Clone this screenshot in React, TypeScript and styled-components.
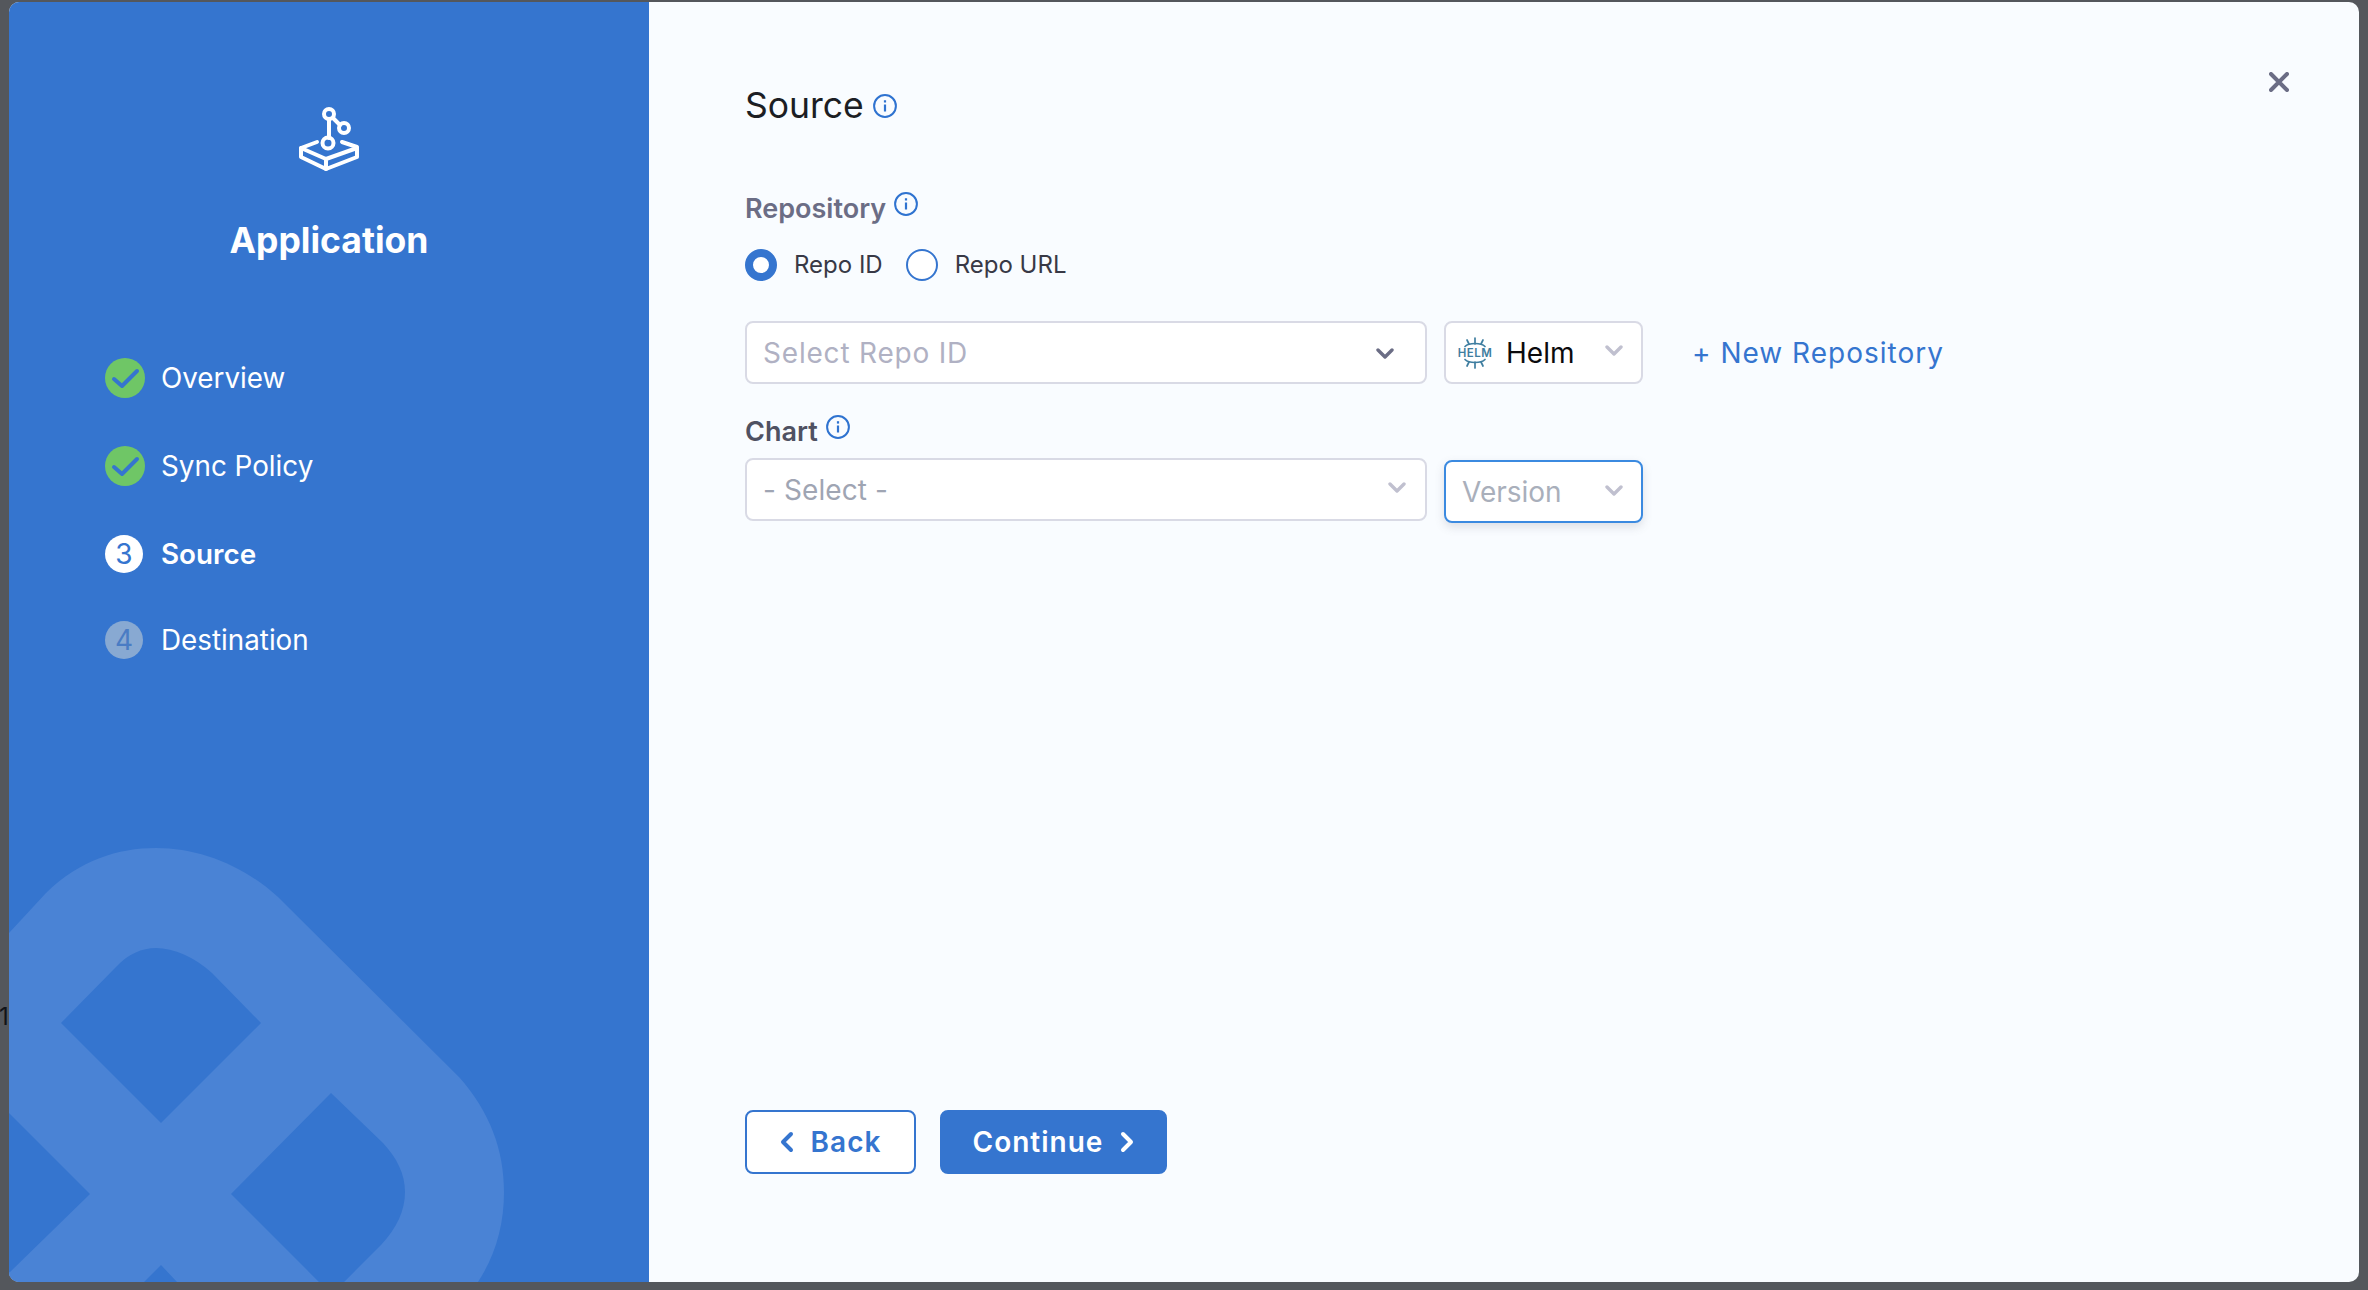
import React from "react";
import styled, { createGlobalStyle } from "styled-components";

const Global = createGlobalStyle`
  html, body { margin: 0; padding: 0; height: 100%; background: #54575c; overflow: hidden; }
  body { font-family: Inter, "Liberation Sans", sans-serif; }
  #root { height: 100%; }
`;

const Page = styled.div`
  position: relative;
  box-sizing: border-box;
  height: 1290px;
  padding: 2px 9px 8px;
  background: #54575c;
`;

const StrayDigit = styled.span`
  position: absolute;
  left: -1px;
  top: 1003px;
  font-size: 24px;
  line-height: 28px;
  color: #111318;
`;

const Modal = styled.div`
  display: flex;
  height: 1280px;
  border-radius: 10px;
  overflow: hidden;
  background: #f9fcff;
`;

const Sidebar = styled.aside`
  position: relative;
  flex: 0 0 640px;
  display: flex;
  flex-direction: column;
  overflow: hidden;
  background: #3575cf;
`;

const Watermark = styled.svg`
  position: absolute;
  left: 0;
  top: 0;
  width: 640px;
  height: 1280px;
`;

const Brand = styled.div`
  position: relative;
  display: flex;
  flex-direction: column;
  align-items: center;
  padding-top: 105px;
`;

const BrandIcon = styled.svg`
  display: block;
  width: 64px;
  height: 66px;
  margin-left: 2px;
`;

const BrandTitle = styled.h1`
  margin: 46px 0 0;
  font-size: 35.5px;
  line-height: 44px;
  font-weight: 700;
  color: #fff;
`;

const Steps = styled.ol`
  position: relative;
  display: flex;
  flex-direction: column;
  margin: 0;
  padding: 95px 0 0 96px;
  list-style: none;
`;

const Step = styled.li<{ $gap: number }>`
  display: flex;
  align-items: center;
  height: 40px;
  margin-bottom: ${(p) => p.$gap}px;
`;

const StepMark = styled.span`
  flex: 0 0 40px;
  width: 40px;
  height: 40px;
  margin-right: 16px;
`;

const StepBadge = styled.span<{ $active?: boolean }>`
  flex: 0 0 38px;
  display: flex;
  align-items: center;
  justify-content: center;
  width: 38px;
  height: 38px;
  margin-right: 18px;
  border-radius: 50%;
  font-size: 28px;
  font-weight: 400;
  line-height: 1;
  background: ${(p) => (p.$active ? "#fff" : "#88a9d2")};
  color: ${(p) => (p.$active ? "#3575cf" : "#4a7cc4")};
`;

const StepLabel = styled.span<{ $active?: boolean }>`
  font-size: 27.8px;
  line-height: 34px;
  font-weight: ${(p) => (p.$active ? 600 : 400)};
  color: #fff;
`;

const Main = styled.main`
  position: relative;
  flex: 1;
  display: flex;
  flex-direction: column;
  padding: 80px 0 0 96px;
`;

const CloseButton = styled.button`
  position: absolute;
  top: 70px;
  right: 70px;
  width: 20px;
  height: 20px;
  padding: 0;
  border: 0;
  background: none;
  color: #6b6d85;
`;

const TitleRow = styled.div`
  display: flex;
  align-items: center;
  gap: 9px;
  height: 48px;
`;

const Title = styled.h2`
  margin: 0;
  font-size: 35.5px;
  line-height: 48px;
  font-weight: 400;
  color: #1c1e24;
`;

const Info = styled.svg`
  display: block;
  flex: none;
  width: 24px;
  height: 24px;
  color: #2f73d0;
`;

const FieldLabel = styled.div<{ $muted?: boolean }>`
  display: flex;
  align-items: flex-start;
  gap: 8px;
  font-size: 27px;
  line-height: 32px;
  font-weight: 600;
  color: ${(p) => (p.$muted ? "#6b6d85" : "#4f5162")};
`;

const RepoLabel = styled(FieldLabel)`
  margin-top: 63px;
  height: 32px;
`;

const ChartLabel = styled(FieldLabel)`
  margin-top: 32px;
  height: 32px;
`;

const LabelInfo = styled(Info)`
  margin-top: -1px;
`;

const RadioRow = styled.div`
  display: flex;
  align-items: center;
  margin-top: 24px;
  height: 32px;
`;

const Radio = styled.span<{ $checked?: boolean }>`
  box-sizing: border-box;
  flex: none;
  width: 32px;
  height: 32px;
  margin-right: 17px;
  border-radius: 50%;
  background: #fff;
  border: ${(p) => (p.$checked ? "8px" : "2px")} solid #3575cf;
`;

const RadioLabel = styled.span`
  margin-right: 23px;
  font-size: 24px;
  line-height: 32px;
  color: #383946;
`;

const SelectRow = styled.div<{ $top: number }>`
  display: flex;
  align-items: flex-start;
  gap: 17px;
  margin-top: ${(p) => p.$top}px;
`;

const Select = styled.div<{ $wide?: boolean; $focus?: boolean }>`
  box-sizing: border-box;
  position: relative;
  display: flex;
  align-items: center;
  flex: none;
  width: ${(p) => (p.$wide ? 682 : 199)}px;
  height: 63px;
  margin-top: ${(p) => (p.$focus ? 2 : 0)}px;
  padding-left: 16px;
  background: #fff;
  border: 2px solid ${(p) => (p.$focus ? "#3b8ae0" : "#d9dae5")};
  border-radius: 8px;
  box-shadow: ${(p) => (p.$focus ? "0 4px 10px rgba(96,97,112,.18)" : "none")};
`;

const Placeholder = styled.span<{ $tone: string; $spacing: number }>`
  font-size: 28px;
  line-height: 34px;
  letter-spacing: ${(p) => p.$spacing}px;
  color: ${(p) => p.$tone};
`;

const HelmValue = styled.span`
  margin-left: 13px;
  font-size: 28px;
  line-height: 34px;
  color: #0b0b0d;
`;

const HelmLogo = styled.svg`
  display: block;
  flex: none;
  width: 36px;
  height: 32px;
  margin-left: -5px;
`;

const Chevron = styled.svg<{ $right: number; $top: number; $tone: string }>`
  position: absolute;
  right: ${(p) => p.$right}px;
  top: ${(p) => p.$top}px;
  width: 18px;
  height: 11px;
  color: ${(p) => p.$tone};
`;

const NewRepo = styled.a`
  align-self: center;
  margin-left: 32px;
  font-size: 28px;
  line-height: 34px;
  letter-spacing: 1px;
  color: #3575cf;
`;

const Footer = styled.div`
  display: flex;
  gap: 24px;
  margin-top: 587px;
`;

const Button = styled.button<{ $primary?: boolean; $width: number }>`
  box-sizing: border-box;
  display: flex;
  align-items: center;
  justify-content: center;
  gap: 17px;
  width: ${(p) => p.$width}px;
  height: 64px;
  padding: 0;
  border-radius: 8px;
  border: 2px solid #3575cf;
  background: ${(p) => (p.$primary ? "#3575cf" : "#fff")};
  color: ${(p) => (p.$primary ? "#fff" : "#3575cf")};
  font-family: Inter, "Liberation Sans", sans-serif;
  font-size: 28px;
  font-weight: 600;
  letter-spacing: 1px;
`;

const ButtonChevron = styled.svg`
  display: block;
  width: 14px;
  height: 22px;
`;

const InfoIcon = ({ as: As = Info }: { as?: typeof Info }) => (
  <As viewBox="0 0 24 24" fill="none" stroke="currentColor">
    <circle cx="12" cy="12" r="10.9" strokeWidth="2" />
    <path d="M12 10.5v7" strokeWidth="2.2" />
    <path d="M12 6.2v2.4" strokeWidth="2.2" />
  </As>
);

const Check = () => (
  <StepMark>
    <svg width="40" height="40" viewBox="0 0 40 40">
      <ellipse cx="20" cy="20" rx="20" ry="20" fill="#6fc666" />
      <path d="M9 21l8 7L32 13" fill="none" stroke="#3575cf" strokeWidth="4" strokeLinecap="round" strokeLinejoin="round" />
    </svg>
  </StepMark>
);

const Down = ({ right, top, tone }: { right: number; top: number; tone: string }) => (
  <Chevron $right={right} $top={top} $tone={tone} viewBox="0 0 18 11" fill="none">
    <path d="M2 2l7 7 7-7" stroke="currentColor" strokeWidth="3.4" strokeLinecap="round" strokeLinejoin="round" />
  </Chevron>
);

const Helm = () => (
  <HelmLogo viewBox="0 0 36 32" fill="none" stroke="#3f7ea0" strokeWidth="1.7" strokeLinecap="round">
    <path d="M8 9.5C12 5.5 24 5.5 28 9.5" />
    <path d="M18 1v6M10 3l2 4M26 3l-2 4" />
    <path d="M8 22.5C12 26.5 24 26.5 28 22.5" />
    <path d="M18 31v-6M10 29l2-4M26 29l-2-4" />
    <text x="18" y="20.2" textAnchor="middle" fontFamily="Inter, sans-serif" fontWeight="600" fontSize="11.5" letterSpacing="0.5" fill="#3f7ea0" stroke="none">
      HELM
    </text>
  </HelmLogo>
);

export default function App() {
  return (
    <Page>
      <Global />
      <StrayDigit>1</StrayDigit>
      <Modal>
        <Sidebar>
          <Watermark viewBox="0 0 640 1280">
            <g transform="translate(-9 -2)">
              <path
                fillRule="evenodd"
                fill="#4a83d5"
                d="M9 933L46 893C80 860 118 848 156 848C200 848 244 866 278 897L459 1077C490 1112 504 1150 504 1192C504 1226 495 1256 478 1282L344 1282L381 1245C397 1228 405 1210 405 1192C405 1174 397 1158 383 1143L331 1093L231 1194L319 1282L177 1282L161 1265L144 1282L9 1282L9 1273L90 1194L9 1113Z
                M61 1023L116 967C128 954 142 948 156 948C174 948 194 957 212 973L261 1023L161 1123Z"
              />
            </g>
          </Watermark>
          <Brand>
            <BrandIcon viewBox="0 0 64 66" fill="none" stroke="#fff" strokeWidth="4" strokeLinecap="round" strokeLinejoin="round">
              <circle cx="31" cy="7" r="5" />
              <circle cx="46" cy="21" r="5" />
              <circle cx="30" cy="36" r="5.5" />
              <path d="M31 12v19M35 11l7 7" />
              <path d="M19 35L3 41V50L28 62L59 50V40L44 35" />
              <path d="M3 41L28 52L59 41M28 52V62" />
            </BrandIcon>
            <BrandTitle>Application</BrandTitle>
          </Brand>
          <Steps>
            <Step $gap={48}>
              <Check />
              <StepLabel>Overview</StepLabel>
            </Step>
            <Step $gap={48}>
              <Check />
              <StepLabel>Sync Policy</StepLabel>
            </Step>
            <Step $gap={46}>
              <StepBadge $active>3</StepBadge>
              <StepLabel $active>Source</StepLabel>
            </Step>
            <Step $gap={0}>
              <StepBadge>4</StepBadge>
              <StepLabel>Destination</StepLabel>
            </Step>
          </Steps>
        </Sidebar>
        <Main>
          <CloseButton aria-label="Close">
            <svg width="20" height="20" viewBox="0 0 20 20" fill="none" stroke="currentColor" strokeWidth="4" strokeLinecap="round">
              <path d="M2 2l16 16M18 2L2 18" />
            </svg>
          </CloseButton>
          <TitleRow>
            <Title>Source</Title>
            <InfoIcon />
          </TitleRow>
          <RepoLabel $muted>
            Repository
            <InfoIcon as={LabelInfo} />
          </RepoLabel>
          <RadioRow>
            <Radio $checked />
            <RadioLabel>Repo ID</RadioLabel>
            <Radio />
            <RadioLabel>Repo URL</RadioLabel>
          </RadioRow>
          <SelectRow $top={40}>
            <Select $wide>
              <Placeholder $tone="#b0b1c3" $spacing={0.8}>Select Repo ID</Placeholder>
              <Down right={31} top={25} tone="#6b6d85" />
            </Select>
            <Select>
              <Helm />
              <HelmValue>Helm</HelmValue>
              <Down right={18} top={22} tone="#c0c0cf" />
            </Select>
            <NewRepo>+ New Repository</NewRepo>
          </SelectRow>
          <ChartLabel>
            Chart
            <InfoIcon as={LabelInfo} />
          </ChartLabel>
          <SelectRow $top={10}>
            <Select $wide>
              <Placeholder $tone="#9fa5b3" $spacing={0.1}>- Select -</Placeholder>
              <Down right={19} top={22} tone="#c0c0cf" />
            </Select>
            <Select $focus>
              <Placeholder $tone="#a9afbb" $spacing={0}>Version</Placeholder>
              <Down right={18} top={23} tone="#c0c0cf" />
            </Select>
          </SelectRow>
          <Footer>
            <Button $width={171}>
              <ButtonChevron viewBox="0 0 14 22" fill="none" stroke="currentColor" strokeWidth="4" strokeLinecap="round" strokeLinejoin="round">
                <path d="M11 3l-8 8 8 8" />
              </ButtonChevron>
              Back
            </Button>
            <Button $primary $width={227}>
              Continue
              <ButtonChevron viewBox="0 0 14 22" fill="none" stroke="currentColor" strokeWidth="4" strokeLinecap="round" strokeLinejoin="round">
                <path d="M3 3l8 8-8 8" />
              </ButtonChevron>
            </Button>
          </Footer>
        </Main>
      </Modal>
    </Page>
  );
}
